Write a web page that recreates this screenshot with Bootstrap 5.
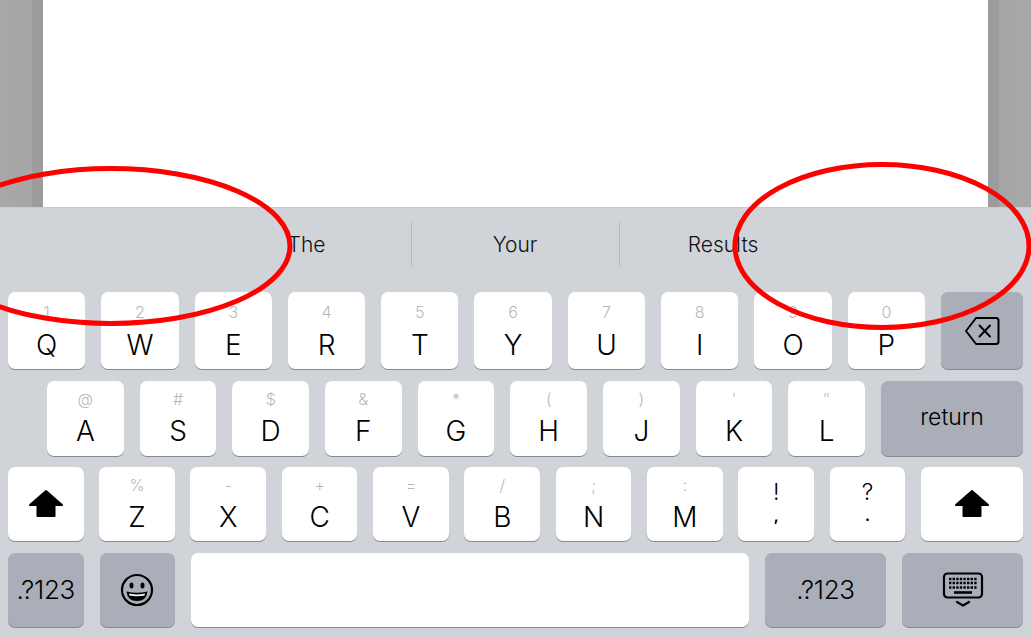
<!DOCTYPE html>
<html lang="en">
<head>
    <meta charset="UTF-8">
    <meta name="viewport" content="width=device-width, initial-scale=1.0">
    <title>Keyboard</title>
    <link rel="stylesheet" href="https://cdn.jsdelivr.net/npm/bootstrap@5.3.2/dist/css/bootstrap.min.css">
    <style>
        html, body {
            height: 100%;
            overflow: hidden;
            background-color: #d0d3d8;
            font-family: Inter, "Liberation Sans", sans-serif;
            font-weight: 350;
            color: #000;
        }
        .screen { width: 1031px; height: 637px; }
        .top-area { height: 207px; }
        .side-left { width: 43px; background: linear-gradient(to right, #a8a8a8 0, #a6a6a6 32px, #9c9c9c 32px); }
        .side-right { width: 43px; background: linear-gradient(to right, #9c9c9c 11px, #a6a6a6 11px, #a8a8a8 100%); }
        .keyboard { background-color: #d0d3d8; border-top: 1px solid #c8cbd0; padding: 0 8px; }
        .suggest-bar { height: 84px; padding-top: 14px; transform: translateX(-1px); }
        .suggest-item { width: 208px; height: 45px; font-size: 21px; line-height: 46px; text-align: center; color: #111; }
        .suggest-item + .suggest-item { border-left: 1px solid #b4b7bc; }
        .key-row { display: flex; gap: 16px; }
        .row-q { height: 77px; margin-bottom: 12px; }
        .row-a { height: 75px; margin-bottom: 11px; padding-left: 39px; }
        .row-z { height: 74px; margin-bottom: 12px; gap: 15.6px; }
        .row-bottom { height: 74px; }
        .kb-key {
            flex: 1 1 0;
            min-width: 0;
            display: flex;
            flex-direction: column;
            align-items: center;
            background-color: #fff;
            border-radius: 7px;
            box-shadow: 0 1px 0 #858a90;
            padding-top: 9px;
        }
        .row-q .kb-key { padding-top: 11px; }
        .kb-key.dark { background-color: #a9aeb8; }
        .kb-key.centered { justify-content: center; padding-top: 0; }
        .hint { height: 18px; line-height: 18px; font-size: 16px; font-weight: 300; color: #b8b8b8; margin-bottom: 7px; }
        .row-q .hint { margin-bottom: 8px; }
        .letter { height: 32px; line-height: 32px; font-size: 28px; }
        .kb-key.punct { padding-top: 11px; }
        .punct-top { height: 28px; line-height: 28px; font-size: 23px; }
        .punct-low { height: 18px; line-height: 18px; margin-top: 1px; font-size: 15px; font-weight: 700; }
        .key-del { flex: 0 0 82px; }
        .key-return { flex: 0 0 142px; font-size: 23px; padding-bottom: 2px; }
        .key-shift-r { flex: 0 0 102px; }
        .key-fixed { flex: 0 0 75.5px; }
        .key-space { flex: 0 0 558px; }
        .key-wide { flex: 0 0 121px; }
        .sym-label { font-size: 26px; letter-spacing: -.3px; padding-bottom: 2px; }
        .marks { left: 0; top: 0; pointer-events: none; }
    </style>
</head>
<body>
    <div class="screen position-relative overflow-hidden d-flex flex-column">
        <div class="top-area d-flex">
            <div class="side-left"></div>
            <div class="flex-grow-1 bg-white"></div>
            <div class="side-right"></div>
        </div>
        <div class="keyboard flex-grow-1">
            <div class="suggest-bar d-flex justify-content-center">
                <div class="suggest-item">The</div>
                <div class="suggest-item">Your</div>
                <div class="suggest-item">Results</div>
            </div>
            <div class="key-row row-q">
                <div class="kb-key"><span class="hint">1</span><span class="letter">Q</span></div>
                <div class="kb-key"><span class="hint">2</span><span class="letter">W</span></div>
                <div class="kb-key"><span class="hint">3</span><span class="letter">E</span></div>
                <div class="kb-key"><span class="hint">4</span><span class="letter">R</span></div>
                <div class="kb-key"><span class="hint">5</span><span class="letter">T</span></div>
                <div class="kb-key"><span class="hint">6</span><span class="letter">Y</span></div>
                <div class="kb-key"><span class="hint">7</span><span class="letter">U</span></div>
                <div class="kb-key"><span class="hint">8</span><span class="letter">I</span></div>
                <div class="kb-key"><span class="hint">9</span><span class="letter">O</span></div>
                <div class="kb-key"><span class="hint">0</span><span class="letter">P</span></div>
                <div class="kb-key dark centered key-del">
                    <svg width="36" height="30" viewBox="0 0 36 30" fill="none" stroke="#000" stroke-width="2" stroke-linejoin="round" stroke-linecap="round">
                        <path d="M12 2H32a2.500 2.500 0 0 1 2.500 2.500V25.500A2.500 2.500 0 0 1 32 28H12L2 15Z"/>
                        <path d="M15.500 9.500 26 20.500M26 9.500 15.500 20.500"/>
                    </svg>
                </div>
            </div>
            <div class="key-row row-a">
                <div class="kb-key"><span class="hint">@</span><span class="letter">A</span></div>
                <div class="kb-key"><span class="hint">#</span><span class="letter">S</span></div>
                <div class="kb-key"><span class="hint">$</span><span class="letter">D</span></div>
                <div class="kb-key"><span class="hint">&amp;</span><span class="letter">F</span></div>
                <div class="kb-key"><span class="hint">*</span><span class="letter">G</span></div>
                <div class="kb-key"><span class="hint">(</span><span class="letter">H</span></div>
                <div class="kb-key"><span class="hint">)</span><span class="letter">J</span></div>
                <div class="kb-key"><span class="hint">′</span><span class="letter">K</span></div>
                <div class="kb-key"><span class="hint">″</span><span class="letter">L</span></div>
                <div class="kb-key dark centered key-return">return</div>
            </div>
            <div class="key-row row-z">
                <div class="kb-key centered key-fixed">
                    <svg width="36" height="30" viewBox="0 0 36 30" fill="#000" stroke="#000" stroke-width="2" stroke-linejoin="round">
                        <path d="M18 2 34 16H26.500V27H9.500V16H2Z"/>
                    </svg>
                </div>
                <div class="kb-key"><span class="hint">%</span><span class="letter">Z</span></div>
                <div class="kb-key"><span class="hint">-</span><span class="letter">X</span></div>
                <div class="kb-key"><span class="hint">+</span><span class="letter">C</span></div>
                <div class="kb-key"><span class="hint">=</span><span class="letter">V</span></div>
                <div class="kb-key"><span class="hint">/</span><span class="letter">B</span></div>
                <div class="kb-key"><span class="hint">;</span><span class="letter">N</span></div>
                <div class="kb-key"><span class="hint">:</span><span class="letter">M</span></div>
                <div class="kb-key punct"><span class="punct-top">!</span><span class="punct-low">,</span></div>
                <div class="kb-key punct"><span class="punct-top">?</span><span class="punct-low">.</span></div>
                <div class="kb-key centered key-shift-r">
                    <svg width="36" height="30" viewBox="0 0 36 30" fill="#000" stroke="#000" stroke-width="2" stroke-linejoin="round">
                        <path d="M18 2 34 16H26.500V27H9.500V16H2Z"/>
                    </svg>
                </div>
            </div>
            <div class="key-row row-bottom">
                <div class="kb-key dark centered key-fixed sym-label">.?123</div>
                <div class="kb-key dark centered key-fixed">
                    <svg width="34" height="34" viewBox="0 0 34 34">
                        <circle cx="17" cy="17" r="15" fill="none" stroke="#000" stroke-width="2.200"/>
                        <ellipse cx="11.500" cy="12.500" rx="2" ry="3" fill="#000"/>
                        <ellipse cx="22.500" cy="12.500" rx="2" ry="3" fill="#000"/>
                        <path d="M6.500 18.500Q17 21 27.500 18.500 26.500 28 17 28 7.500 28 6.500 18.500Z" fill="#000"/>
                        <path d="M9 20.500Q17 22.500 25 20.500L24.500 22.500Q17 24 9.500 22.500Z" fill="#fff"/>
                    </svg>
                </div>
                <div class="kb-key key-space"></div>
                <div class="kb-key dark centered key-wide sym-label">.?123</div>
                <div class="kb-key dark centered key-wide">
                    <svg width="42" height="36" viewBox="0 0 42 36" fill="none">
                        <rect x="2" y="1.500" width="38" height="24" rx="3.500" stroke="#000" stroke-width="2.200"/>
                        <path d="M7 7H35M7 11H35M7 15.500H35" stroke="#000" stroke-width="2.400" stroke-dasharray="2.400 1.200"/>
                        <path d="M12 20.500H30" stroke="#000" stroke-width="2.600"/>
                        <path d="M15 30 21 33.500 27 30" stroke="#000" stroke-width="2.200" stroke-linecap="round" stroke-linejoin="round"/>
                    </svg>
                </div>
            </div>
        </div>
        <svg class="marks position-absolute" width="1031" height="637" viewBox="0 0 1031 637" fill="none" stroke="#fe0000" stroke-width="5">
            <ellipse cx="111" cy="246" rx="179" ry="77.500"/>
            <ellipse cx="882" cy="246" rx="147" ry="81.500"/>
        </svg>
    </div>
    <script src="https://cdn.jsdelivr.net/npm/bootstrap@5.3.2/dist/js/bootstrap.bundle.min.js"></script>
</body>
</html>
